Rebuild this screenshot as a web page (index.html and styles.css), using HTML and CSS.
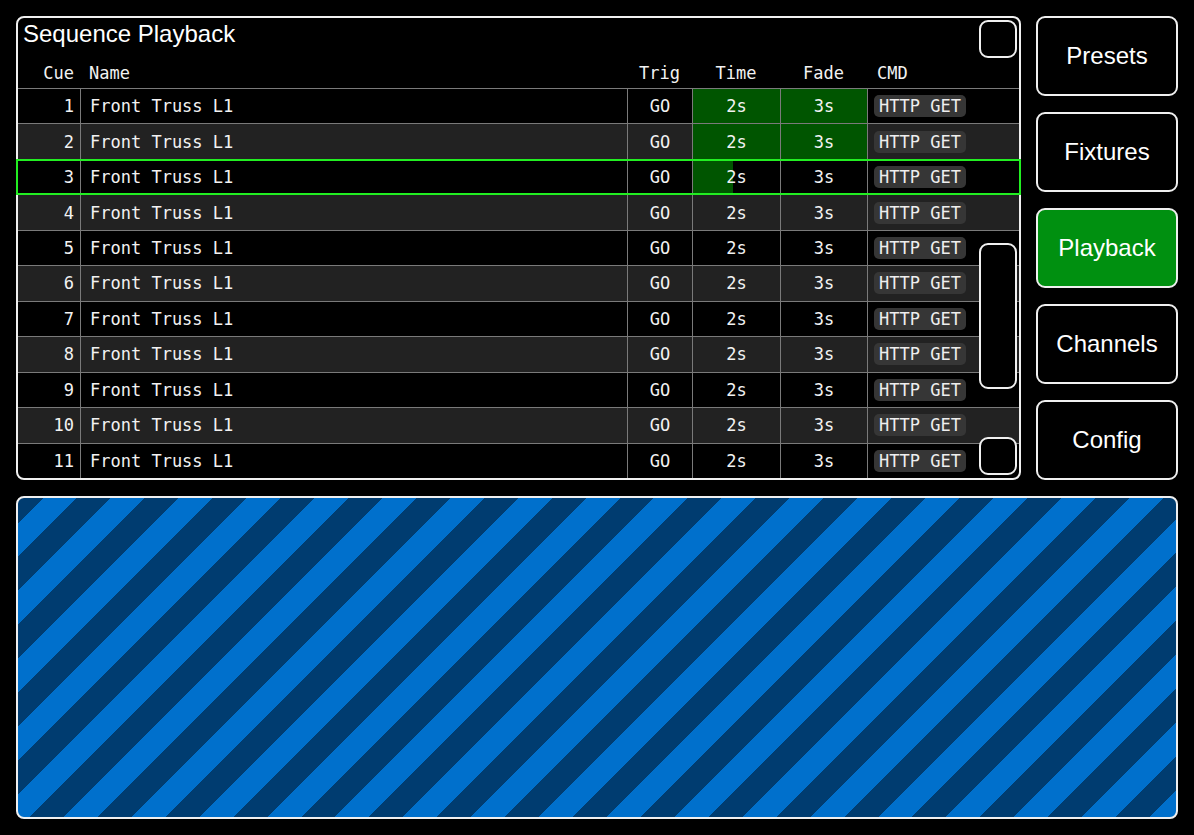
FILE: index.html
```html
<!DOCTYPE html>
<html lang="en">
<head>
<meta charset="utf-8">
<title>Sequence Playback</title>
<link rel="stylesheet" href="styles.css">
</head>
<body>
<div class="app">
  <section class="seq">
    <div class="seq-title">Sequence Playback</div>
    <div class="thead">
      <div class="cell c-cue">Cue</div>
      <div class="cell c-name">Name</div>
      <div class="cell c-trig">Trig</div>
      <div class="cell c-time">Time</div>
      <div class="cell c-fade">Fade</div>
      <div class="cell c-cmd">CMD</div>
    </div>
    <div class="tbody">
      <div class="row">
        <div class="cell c-cue">1</div><div class="cell c-name">Front Truss L1</div><div class="cell c-trig">GO</div>
        <div class="cell c-time done"><span>2s</span></div><div class="cell c-fade done"><span>3s</span></div>
        <div class="cell c-cmd"><span class="badge">HTTP GET</span></div>
      </div>
      <div class="row alt">
        <div class="cell c-cue">2</div><div class="cell c-name">Front Truss L1</div><div class="cell c-trig">GO</div>
        <div class="cell c-time done"><span>2s</span></div><div class="cell c-fade done"><span>3s</span></div>
        <div class="cell c-cmd"><span class="badge">HTTP GET</span></div>
      </div>
      <div class="row current">
        <div class="cell c-cue">3</div><div class="cell c-name">Front Truss L1</div><div class="cell c-trig">GO</div>
        <div class="cell c-time"><i class="fill" style="width:46%"></i><span>2s</span></div><div class="cell c-fade"><span>3s</span></div>
        <div class="cell c-cmd"><span class="badge">HTTP GET</span></div>
      </div>
      <div class="row alt">
        <div class="cell c-cue">4</div><div class="cell c-name">Front Truss L1</div><div class="cell c-trig">GO</div>
        <div class="cell c-time"><span>2s</span></div><div class="cell c-fade"><span>3s</span></div>
        <div class="cell c-cmd"><span class="badge">HTTP GET</span></div>
      </div>
      <div class="row">
        <div class="cell c-cue">5</div><div class="cell c-name">Front Truss L1</div><div class="cell c-trig">GO</div>
        <div class="cell c-time"><span>2s</span></div><div class="cell c-fade"><span>3s</span></div>
        <div class="cell c-cmd"><span class="badge">HTTP GET</span></div>
      </div>
      <div class="row alt">
        <div class="cell c-cue">6</div><div class="cell c-name">Front Truss L1</div><div class="cell c-trig">GO</div>
        <div class="cell c-time"><span>2s</span></div><div class="cell c-fade"><span>3s</span></div>
        <div class="cell c-cmd"><span class="badge">HTTP GET</span></div>
      </div>
      <div class="row">
        <div class="cell c-cue">7</div><div class="cell c-name">Front Truss L1</div><div class="cell c-trig">GO</div>
        <div class="cell c-time"><span>2s</span></div><div class="cell c-fade"><span>3s</span></div>
        <div class="cell c-cmd"><span class="badge">HTTP GET</span></div>
      </div>
      <div class="row alt">
        <div class="cell c-cue">8</div><div class="cell c-name">Front Truss L1</div><div class="cell c-trig">GO</div>
        <div class="cell c-time"><span>2s</span></div><div class="cell c-fade"><span>3s</span></div>
        <div class="cell c-cmd"><span class="badge">HTTP GET</span></div>
      </div>
      <div class="row">
        <div class="cell c-cue">9</div><div class="cell c-name">Front Truss L1</div><div class="cell c-trig">GO</div>
        <div class="cell c-time"><span>2s</span></div><div class="cell c-fade"><span>3s</span></div>
        <div class="cell c-cmd"><span class="badge">HTTP GET</span></div>
      </div>
      <div class="row alt">
        <div class="cell c-cue">10</div><div class="cell c-name">Front Truss L1</div><div class="cell c-trig">GO</div>
        <div class="cell c-time"><span>2s</span></div><div class="cell c-fade"><span>3s</span></div>
        <div class="cell c-cmd"><span class="badge">HTTP GET</span></div>
      </div>
      <div class="row">
        <div class="cell c-cue">11</div><div class="cell c-name">Front Truss L1</div><div class="cell c-trig">GO</div>
        <div class="cell c-time"><span>2s</span></div><div class="cell c-fade"><span>3s</span></div>
        <div class="cell c-cmd"><span class="badge">HTTP GET</span></div>
      </div>
    </div>
    <div class="sb sb-up"></div>
    <div class="sb sb-thumb"></div>
    <div class="sb sb-down"></div>
  </section>

  <nav class="nav">
    <div class="nav-btn">Presets</div>
    <div class="nav-btn">Fixtures</div>
    <div class="nav-btn active">Playback</div>
    <div class="nav-btn">Channels</div>
    <div class="nav-btn">Config</div>
  </nav>

  <section class="stage"></section>
</div>
</body>
</html>
```

FILE: styles.css
```css
* { box-sizing: border-box; }

html, body {
  margin: 0;
  height: 100%;
  background: #000;
}

body {
  color: #f2f2f2;
  font-family: "Liberation Sans", Arial, sans-serif;
}

.app {
  height: 100vh;
  padding: 16px;
  display: grid;
  grid-template-columns: 1fr 142px;
  grid-template-rows: 464px 1fr;
  column-gap: 15px;
  row-gap: 16px;
}

/* ---------- sequence table panel ---------- */
.seq {
  position: relative;
  border: 2px solid #f0f0f0;
  border-radius: 8px;
  display: flex;
  flex-direction: column;
}

.seq-title {
  height: 38px;
  padding: 2px 5px 0;
  font-size: 24px;
  line-height: 28px;
  color: #fff;
}

.thead,
.row {
  display: grid;
  grid-template-columns: 62px 547px 65px 88px 87px 1fr;
  font-family: "DejaVu Sans Mono", "Liberation Mono", monospace;
  font-size: 17px;
}

.thead {
  height: 32px;
  line-height: 34px;
}

.tbody {
  flex: 1;
  display: flex;
  flex-direction: column;
}

.row {
  position: relative;
  flex: 1 1 0;
  border-top: 1px solid #7a7a7a;
}

.row.alt { background: #222; }

.row.current { z-index: 1; }

.row.current::after {
  content: "";
  position: absolute;
  top: -1px;
  bottom: -1px;
  left: -2px;
  right: -2px;
  border: 2px solid #22ee22;
  pointer-events: none;
}

.cell {
  position: relative;
  display: flex;
  align-items: center;
  white-space: pre;
}

.row .cell + .cell { border-left: 1px solid #7a7a7a; }

.c-cue { justify-content: flex-end; padding-right: 6px; }
.c-name { padding-left: 9px; }
.c-trig, .c-time, .c-fade { justify-content: center; }
.c-cmd { padding-left: 6px; }
.thead .c-cmd { padding-left: 10px; }

.cell span { position: relative; }

.cell.done { background: #005500; }

.fill {
  position: absolute;
  left: 0;
  top: 0;
  bottom: 0;
  background: #005500;
}

.badge {
  display: inline-block;
  background: #363636;
  border-radius: 5px;
  padding: 0 5px;
  line-height: 22px;
  color: #eee;
}

/* scroll controls laid over the table */
.sb {
  position: absolute;
  right: 2px;
  width: 38px;
  background: #000;
  border: 2px solid #f0f0f0;
  border-radius: 9px;
  z-index: 2;
}
.sb-up { top: 2px; height: 38px; }
.sb-thumb { top: 225px; height: 146px; }
.sb-down { bottom: 3px; height: 38px; }

/* ---------- navigation ---------- */
.nav {
  display: flex;
  flex-direction: column;
  gap: 16px;
}

.nav-btn {
  height: 80px;
  border: 2px solid #f0f0f0;
  border-radius: 9px;
  display: flex;
  align-items: center;
  justify-content: center;
  font-size: 24px;
  color: #fff;
}

.nav-btn.active { background: #009010; }

/* ---------- striped stage ---------- */
.stage {
  grid-column: 1 / -1;
  border: 2px solid #f0f0f0;
  border-radius: 8px;
  background: repeating-linear-gradient(135deg,
    #003c70 0 17.7px,
    #0070cc 17.7px 41.7px,
    #003c70 41.7px 48px);
}
```
